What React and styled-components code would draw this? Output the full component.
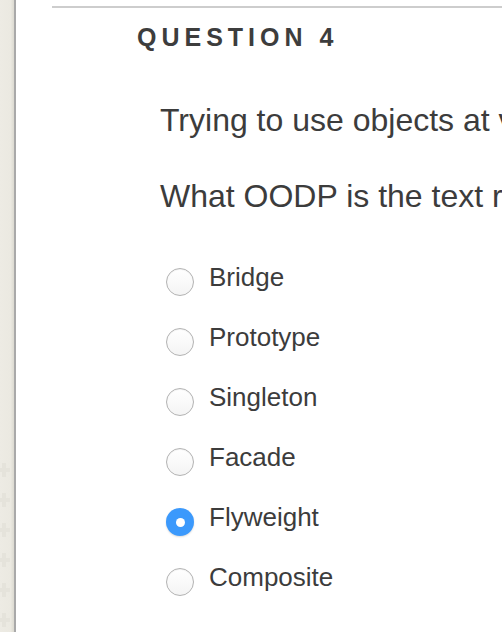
import React from 'react'
import styled, { createGlobalStyle } from 'styled-components'

const GlobalStyle = createGlobalStyle`
  html, body {
    margin: 0;
    padding: 0;
    background: #ffffff;
  }
  body {
    font-family: "Liberation Sans", Arial, Helvetica, sans-serif;
    color: #3c3c3c;
  }
`

const options = ['Bridge', 'Prototype', 'Singleton', 'Facade', 'Flyweight', 'Composite']

// faint cross pattern on the left panel
const Cross = () => (
  <svg width="12" height="14" viewBox="0 0 12 14">
    <path d="M4 0h4v5h4v4H8v5H4V9H0V5h4z" fill="#e5e3db" />
  </svg>
)

const App = () => {
  return (
    <>
      <GlobalStyle />
      <Page>
        <Sidebar>
          {[0, 1, 2, 3, 4, 5].map((i) => (
            <PlusMark key={i}>
              <Cross />
            </PlusMark>
          ))}
        </Sidebar>
        <Main>
          <Rule />
          <Heading>QUESTION 4</Heading>
          <Body>
            <Prompt>Trying to use objects at various levels of granularity</Prompt>
            <Prompt>What OODP is the text referring to?</Prompt>
          </Body>
          <Options>
            {options.map((label) => (
              <Option key={label}>
                <Radio checked={label === 'Flyweight'} />
                <Label>{label}</Label>
              </Option>
            ))}
          </Options>
        </Main>
      </Page>
    </>
  )
}

const Page = styled.div`
  display: flex;
  width: 502px;
  height: 632px;
  overflow: hidden;
`

const Sidebar = styled.div`
  width: 14px;
  flex-shrink: 0;
  background: linear-gradient(to right, #edebe4 0%, #ebe9e1 75%, #dcdad1 100%);
  border-right: 2px solid #a9a9a9;
  display: flex;
  flex-direction: column;
  gap: 16px;
  padding-top: 463px;
  overflow: hidden;
`

const PlusMark = styled.div`
  height: 14px;
  margin-left: -2px;
  display: flex;
`

const Main = styled.div`
  flex: 1;
  padding-left: 36px;
  padding-top: 6px;
  overflow: hidden;
`

const Rule = styled.div`
  border-top: 2px solid #cdcdcd;
`

const Heading = styled.h2`
  margin: 14px 0 0 85px;
  font-size: 25px;
  line-height: 30px;
  font-weight: bold;
  letter-spacing: 5px;
  color: #3d3d3d;
`

const Body = styled.div`
  margin: 50px 0 0 108px;
  display: flex;
  flex-direction: column;
  gap: 39px;
`

const Prompt = styled.p`
  margin: 0;
  font-size: 32px;
  line-height: 37px;
  white-space: nowrap;
  color: #3c3c3c;
`

const Options = styled.div`
  margin: 46px 0 0 114px;
  display: flex;
  flex-direction: column;
  gap: 28px;
`

const Option = styled.label`
  display: flex;
  align-items: center;
  gap: 15px;
  height: 32px;
`

const Radio = styled.span`
  width: 28px;
  height: 28px;
  border-radius: 50%;
  box-sizing: border-box;
  flex-shrink: 0;
  margin-top: 10px;
  display: flex;
  align-items: center;
  justify-content: center;
  background: ${({ checked }) => (checked ? '#3b99fc' : 'linear-gradient(#ffffff, #f4f4f4)')};
  border: ${({ checked }) => (checked ? 'none' : '1px solid #b3b3b3')};
  box-shadow: ${({ checked }) =>
    checked ? '0 1px 2px rgba(0,0,0,0.15)' : 'inset 0 1px 1px rgba(0,0,0,0.05)'};

  &::after {
    content: '';
    display: ${({ checked }) => (checked ? 'block' : 'none')};
    width: 9px;
    height: 9px;
    border-radius: 50%;
    background: #ffffff;
  }
`

const Label = styled.span`
  font-size: 26px;
  line-height: 32px;
  color: #3c3c3c;
`

export default App
